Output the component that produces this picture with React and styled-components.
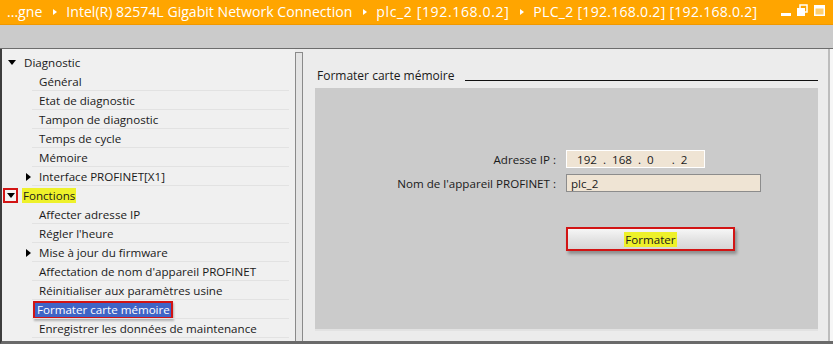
import React from "react";
import styled, { createGlobalStyle } from "styled-components";

const Global = createGlobalStyle`
  html, body { margin: 0; padding: 0; background: #ececec; }
  body { font-family: "Open Sans", "Noto Sans", sans-serif; }
  * { box-sizing: border-box; }
`;

const Frame = styled.div`
  width: 833px;
  height: 344px;
  display: flex;
  flex-direction: column;
  overflow: hidden;
  background: #ececec;
`;

const TitleBar = styled.div`
  height: 25px;
  background: #ffa500;
  border-bottom: 1px solid #f09800;
  display: flex;
  align-items: center;
  padding: 0 0 0 7px;
  color: #fff;
  font-size: 14.1px;
  white-space: nowrap;
`;

const Crumb = styled.span`
  line-height: 1;
  min-width: ${(p) => (p.$w ? `${p.$w}px` : "0")};
  letter-spacing: ${(p) => p.$ls ?? 0}px;
`;

const CrumbSep = styled.span`
  display: inline-block;
  width: 0;
  height: 0;
  margin: 0 9px 0 11px;
  border-top: 3.5px solid transparent;
  border-bottom: 3.5px solid transparent;
  border-left: 4px solid #fff;
`;

const WinControls = styled.div`
  margin-left: auto;
  display: flex;
  align-items: center;
  padding-right: 4px;
`;

const Toolbar = styled.div`
  height: 24px;
  background: #cbcbcb;
  border-bottom: 1px solid #6d6d6d;
`;

const Body = styled.div`
  flex: 1;
  display: flex;
  border-left: 2px solid #3d3d3d;
  border-bottom: 3px solid #6a6a6a;
  min-height: 0;
`;

const LeftPane = styled.div`
  width: 293px;
  background: #f0f0f0;
  padding-top: 4px;
  display: flex;
  flex-direction: column;
`;

const TreeRow = styled.div`
  height: 19px;
  display: flex;
  align-items: center;
  font-size: 11.6px;
  color: #1a1a1a;
  padding-left: ${(p) => p.$indent}px;
  position: relative;
  white-space: nowrap;
  &::after {
    content: "";
    position: absolute;
    left: 30px;
    right: 6px;
    bottom: 0;
    height: 1px;
    background: ${(p) => (p.$line ? "#e2e2e2" : "transparent")};
  }
`;

const Arrow = styled.span`
  display: inline-block;
  width: 0;
  height: 0;
  ${(p) =>
    p.$down
      ? `border-left: 4px solid transparent; border-right: 4px solid transparent; border-top: 5px solid #000;`
      : `border-top: 4px solid transparent; border-bottom: 4px solid transparent; border-left: 5px solid #000;`}
`;

const ArrowSlot = styled.span`
  width: ${(p) => p.$w}px;
  display: inline-flex;
  align-items: center;
`;

const RedArrowBox = styled.span`
  width: 15px;
  height: 15px;
  border: 2px solid #d21414;
  display: inline-flex;
  align-items: center;
  justify-content: center;
  margin-right: 4px;
  margin-left: -4px;
  background: #f4f4f4;
`;

const Highlight = styled.span`
  background: #eef12a;
  padding: 0 1px;
  line-height: 15px;
`;

const Selected = styled.span`
  background: #3f64c6;
  color: #fff;
  border: 2px solid #d21414;
  box-shadow: 1px 2px 2px rgba(0, 0, 0, 0.25);
  padding: 0 1px 0 2px;
  margin-left: -6px;
  line-height: 14px;
`;

const Splitter = styled.div`
  width: 8px;
  margin-top: 3px;
  background: #e4e4e4;
  border: 1px solid #8a8a8a;
  border-bottom: none;
`;

const RightPane = styled.div`
  flex: 1;
  background: #ececec;
  padding: 0 12px;
  display: flex;
  flex-direction: column;
  border-right: 3px solid #f6f6f6;
  box-shadow: inset -2px 0 0 #bdbdbd;
`;

const SectionHead = styled.div`
  height: 39px;
  display: flex;
  align-items: flex-end;
  padding-bottom: 6px;
  padding-left: 2px;
  gap: 11px;
`;

const SectionTitle = styled.span`
  font-size: 12px;
  color: #1a1a1a;
  line-height: 1;
  white-space: nowrap;
`;

const SectionRule = styled.span`
  flex: 1;
  height: 1px;
  background: #111;
  margin-bottom: 1px;
`;

const Panel = styled.div`
  height: 243px;
  background: #cbcbcb;
  border-bottom: 2px solid #e2e2e2;
  padding-top: 62px;
`;

const FormGrid = styled.div`
  display: grid;
  grid-template-columns: 241px 252px;
  column-gap: 10px;
  row-gap: 6px;
  align-items: center;
`;

const Label = styled.div`
  text-align: right;
  font-size: 11.6px;
  color: #1a1a1a;
  white-space: nowrap;
`;

const Field = styled.div`
  width: ${(p) => p.$w}px;
  height: 18px;
  background: #efe4d4;
  border: 1px solid ${(p) => (p.$light ? "#ffffff" : "#8c8c8c")};
  font-size: 11.6px;
  color: #1a1a1a;
  display: flex;
  align-items: center;
  padding-left: 4px;
  white-space: pre;
`;

const ButtonCell = styled.div`
  grid-column: 2;
  margin-top: 29px;
`;

const Button = styled.div`
  width: 169px;
  height: 24px;
  border: 2px solid #d21414;
  background: linear-gradient(#f6f6f6, #e4e4e4 50%, #d6d6d6);
  box-shadow: 2px 3px 3px rgba(0, 0, 0, 0.3);
  display: flex;
  align-items: center;
  justify-content: center;
  font-size: 11.6px;
  color: #1a1a1a;
`;

const WinIcon = () => (
  <svg width="50" height="16" viewBox="0 0 50 16">
    <rect x="2" y="9" width="10" height="3" fill="#fff" />
    <rect x="21" y="1" width="7" height="7" fill="none" stroke="#fff" strokeWidth="1.5" />
    <rect x="18" y="4" width="8" height="8" fill="#fff" />
    <rect x="35" y="1" width="11" height="11" fill="#fff" />
    <rect x="36.5" y="4.5" width="8" height="6" fill="#ffcf6e" />
  </svg>
);

const tree = [
  { t: "Diagnostic", level: 0, arrow: "down" },
  { t: "Général", level: 1 },
  { t: "Etat de diagnostic", level: 1 },
  { t: "Tampon de diagnostic", level: 1 },
  { t: "Temps de cycle", level: 1 },
  { t: "Mémoire", level: 1 },
  { t: "Interface PROFINET[X1]", level: 1, arrow: "right" },
  { t: "Fonctions", level: 0, arrow: "boxed" },
  { t: "Affecter adresse IP", level: 1 },
  { t: "Régler l'heure", level: 1 },
  { t: "Mise à jour du firmware", level: 1, arrow: "right" },
  { t: "Affectation de nom d'appareil PROFINET", level: 1 },
  { t: "Réinitialiser aux paramètres usine", level: 1 },
  { t: "Formater carte mémoire", level: 1, selected: true },
  { t: "Enregistrer les données de maintenance", level: 1 },
];

function Row({ item }) {
  if (item.level === 0) {
    return (
      <TreeRow $indent={item.arrow === "boxed" ? 5 : 6} $line={false}>
        {item.arrow === "boxed" ? (
          <>
            <RedArrowBox>
              <Arrow $down />
            </RedArrowBox>
            <Highlight>{item.t}</Highlight>
          </>
        ) : (
          <>
            <ArrowSlot $w={16}>
              <Arrow $down />
            </ArrowSlot>
            {item.t}
          </>
        )}
      </TreeRow>
    );
  }
  return (
    <TreeRow $indent={24} $line>
      <ArrowSlot $w={13}>{item.arrow === "right" && <Arrow />}</ArrowSlot>
      {item.selected ? <Selected>{item.t}</Selected> : item.t}
    </TreeRow>
  );
}

export default function App() {
  return (
    <Frame>
      <Global />
      <TitleBar>
        <Crumb>...gne</Crumb>
        <CrumbSep />
        <Crumb>Intel(R) 82574L Gigabit Network Connection</Crumb>
        <CrumbSep />
        <Crumb $w={128} $ls={0.6}>plc_2 [192.168.0.2]</Crumb>
        <CrumbSep />
        <Crumb $ls={0.25}>PLC_2 [192.168.0.2] [192.168.0.2]</Crumb>
        <WinControls>
          <WinIcon />
        </WinControls>
      </TitleBar>
      <Toolbar />
      <Body>
        <LeftPane>
          {tree.map((it) => (
            <Row key={it.t} item={it} />
          ))}
        </LeftPane>
        <Splitter />
        <RightPane>
          <SectionHead>
            <SectionTitle>Formater carte mémoire</SectionTitle>
            <SectionRule />
          </SectionHead>
          <Panel>
            <FormGrid>
              <Label>Adresse IP :</Label>
              <Field $w={139} $light>{"  192  .  168  .  0      .  2"}</Field>
              <Label>Nom de l'appareil PROFINET :</Label>
              <Field $w={195}>plc_2</Field>
              <ButtonCell>
                <Button>
                  <Highlight>Formater</Highlight>
                </Button>
              </ButtonCell>
            </FormGrid>
          </Panel>
        </RightPane>
      </Body>
    </Frame>
  );
}
